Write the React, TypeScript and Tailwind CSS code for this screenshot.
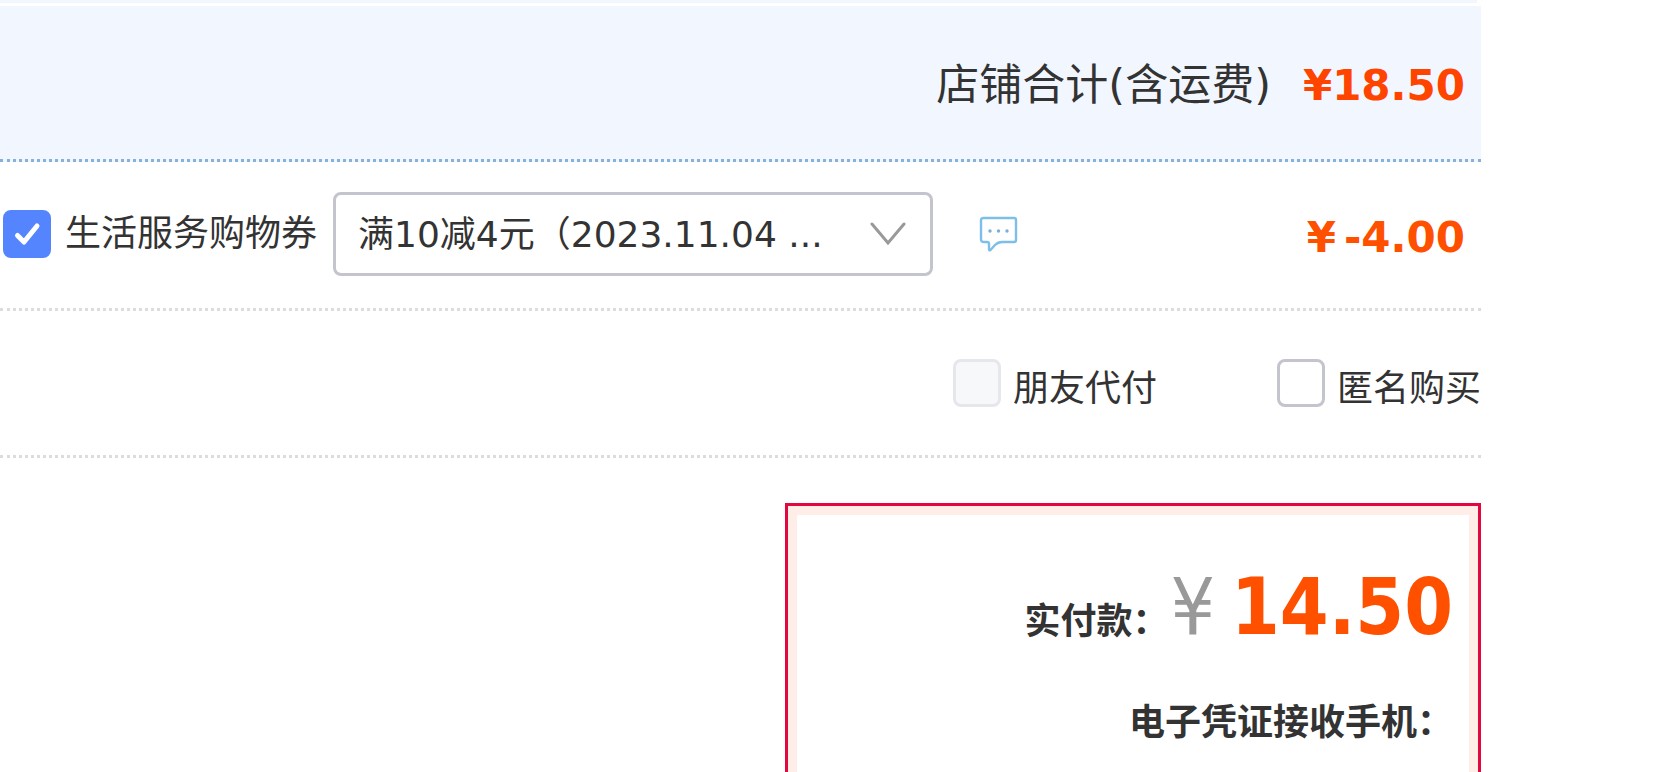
import { useState } from 'react';

interface CheckBoxProps {
  id: string;
  label: string;
  checked: boolean;
  disabled?: boolean;
  className?: string;
  onChange: (value: boolean) => void;
}

const CheckBox: React.FC<CheckBoxProps> = ({ id, label, checked, disabled, className, onChange }) => {
  return (
    <div className={`flex shrink-0 text-[36px] ${className}`}>
      <span className="relative h-12 w-12 shrink-0">
        <input
          id={id}
          type="checkbox"
          checked={checked}
          disabled={disabled}
          onChange={(e) => onChange(e.target.checked)}
          className="block h-12 w-12 appearance-none rounded-lg border-3 border-[#c4c4ce] bg-white checked:border-[#5584ff] checked:bg-[#5584ff] disabled:border-[#e6e7eb] disabled:bg-[#f7f8fa]"
        />
        {checked && (
          <svg viewBox="0 0 48 48" className="pointer-events-none absolute inset-0 h-12 w-12" fill="none">
            <path d="M14.500 25.500L21 32L34 16" stroke="#fff" strokeWidth="5" strokeLinecap="round" strokeLinejoin="round" />
          </svg>
        )}
      </span>
      <label htmlFor={id} className="whitespace-nowrap">
        {label}
      </label>
    </div>
  );
};

const ChatIcon = () => (
  <svg width="40" height="36" viewBox="0 0 40 36" fill="none">
    <path
      d="M4.500 2H35Q37 2 37 4V24Q37 26 35 26H23Q19 26 16 29L11.500 34Q10 35 10 33V28Q10 26 8 26H5Q2 26 2 23V4.500Q2 2 4.500 2Z"
      stroke="#7dbfe8"
      strokeWidth="2.400"
      strokeLinejoin="round"
    />
    <circle cx="11" cy="15" r="1.700" fill="#7aaedb" />
    <circle cx="19.500" cy="15" r="1.700" fill="#7aaedb" />
    <circle cx="28" cy="15" r="1.700" fill="#7aaedb" />
  </svg>
);

export default function App() {
  const [useCoupon, setUseCoupon] = useState(true);
  const [anonymous, setAnonymous] = useState(false);

  return (
    <div className="flex h-screen flex-col overflow-hidden bg-white pr-[183px] font-['DejaVu_Sans','Noto_Sans_CJK_SC',sans-serif] text-[#333]">
      {/* end of the goods list */}
      <div className="mr-1 mb-[3px] h-[3px] shrink-0 bg-[#f2f7ff]" />

      {/* shop total */}
      <div className="flex h-[156px] shrink-0 items-center justify-end gap-8 border-b-3 border-dotted border-[#85b1db] bg-[#f2f7ff] pt-1.5 pr-4">
        <span className="text-[43px]">店铺合计(含运费)</span>
        <span className="text-[42px] font-bold text-[#ff4400]">¥18.50</span>
      </div>

      {/* coupon */}
      <div className="flex h-[149px] shrink-0 items-center border-b-3 border-dotted border-[#dcdcdc] pr-4 pb-0.5 pl-[3px]">
        <CheckBox
          id="coupon"
          label="生活服务购物券"
          className="gap-3.5 leading-[48px]"
          checked={useCoupon}
          onChange={setUseCoupon}
        />
        <div className="relative ml-4 w-[600px] shrink-0">
          <select
            aria-label="生活服务购物券"
            className="block h-[84px] w-full appearance-none rounded-lg border-3 border-[#c4c4ce] bg-white pt-0.5 pr-20 pl-[22px] text-4xl"
          >
            <option>满10减4元（2023.11.04 ...</option>
          </select>
          <svg width="36" height="24" viewBox="0 0 36 24" fill="none" className="pointer-events-none absolute top-[30px] right-[27px]">
            <path d="M2 2L18 21L34 2" stroke="#999" strokeWidth="3" strokeLinecap="round" />
          </svg>
        </div>
        <button type="button" aria-label="留言" className="ml-[46px]">
          <ChatIcon />
        </button>
        <span className="ml-auto flex gap-2 pt-1.5 text-[42px] font-bold text-[#ff5000]">
          <span>¥</span>
          <span>-4.00</span>
        </span>
      </div>

      {/* options */}
      <div className="flex h-[147px] shrink-0 items-start justify-end gap-30 border-b-3 border-dotted border-[#dcdcdc] pt-12">
        <CheckBox
          id="friend"
          label="朋友代付"
          className="gap-3 leading-[60px]"
          checked={false}
          disabled
          onChange={() => {}}
        />
        <CheckBox
          id="anonymous"
          label="匿名购买"
          className="gap-3 leading-[60px]"
          checked={anonymous}
          onChange={setAnonymous}
        />
      </div>

      {/* amount to pay */}
      <div className="mt-[45px] flex w-[696px] flex-1 self-end border-3 border-b-0 border-[#e4063f]">
        <div className="flex-1 border-9 border-b-0 border-[#ffeee8] pt-11">
          <div className="flex items-baseline justify-end pr-4 font-['DejaVu_Sans_Condensed','DejaVu_Sans','Noto_Sans_CJK_SC',sans-serif] text-[78px] leading-[96px]">
            <span className="mr-0.5 text-4xl font-bold">实付款：</span>
            <span className="text-[#999]">¥</span>
            <strong className="ml-4 text-[#ff5000]">14.50</strong>
          </div>
          <p className="mt-12 pr-4 text-right text-4xl font-bold">电子凭证接收手机：</p>
        </div>
      </div>
    </div>
  );
}
